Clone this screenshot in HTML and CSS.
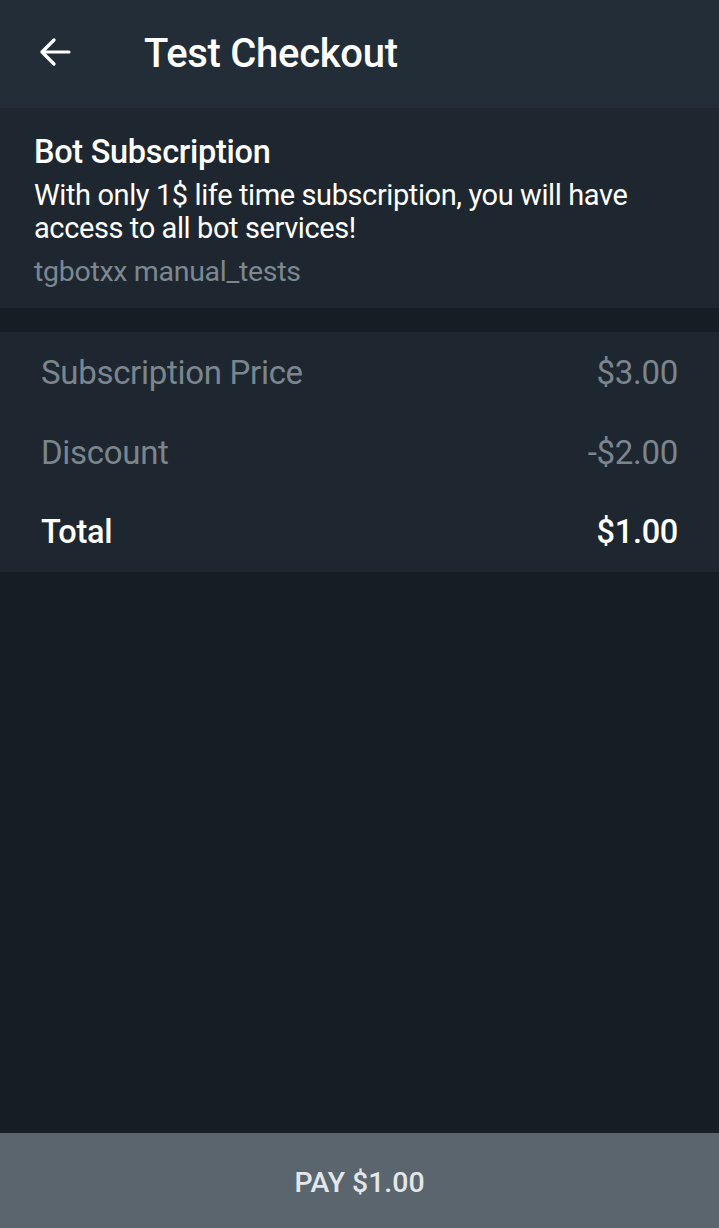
FILE: index.html
```html
<!DOCTYPE html>
<html>
<head>
<meta charset="utf-8">
<link rel="stylesheet" href="styles.css">
</head>
<body>
<div class="app">
  <header class="topbar">
    <svg class="back" width="34" height="28" viewBox="0 0 34 28"><path d="M31 14H4M16 2L4 14l12 12" fill="none" stroke="#fff" stroke-width="3.2" stroke-linecap="round" stroke-linejoin="round"/></svg>
    <h1 class="title">Test Checkout</h1>
  </header>
  <section class="product">
    <div class="p-name">Bot Subscription</div>
    <div class="p-desc">With only 1$ life time subscription, you will have access to all bot services!</div>
    <div class="p-bot">tgbotxx manual_tests</div>
  </section>
  <section class="prices">
    <div class="row"><span>Subscription Price</span><span>$3.00</span></div>
    <div class="row"><span>Discount</span><span>-$2.00</span></div>
    <div class="row total"><span>Total</span><span>$1.00</span></div>
  </section>
  <div class="spacer"></div>
  <button class="pay">PAY $1.00</button>
</div>
</body>
</html>
```
FILE: styles.css
```css
* { box-sizing: border-box; }
html, body { margin: 0; padding: 0; }
body { background: #151d25; font-family: Roboto, "Liberation Sans", sans-serif; color: #fff; }
.app { display: flex; flex-direction: column; height: 1228px; }
.topbar { height: 108px; background: #232d37; display: flex; align-items: center; padding-left: 38px; }
.back { display: block; margin-bottom: 4px; }
.title { margin: 0 0 0 72px; font-size: 40px; font-weight: 500; letter-spacing: -0.3px; margin-bottom: 2px; }
.product { background: #1e2730; height: 200px; padding: 24px 34px 0; }
.p-name { font-size: 32.5px; font-weight: 500; line-height: 40px; letter-spacing: -0.3px; }
.p-desc { font-size: 29px; line-height: 33px; margin-top: 7px; letter-spacing: -0.4px; }
.p-bot { font-size: 28.5px; line-height: 33px; margin-top: 10px; color: #7d8790; letter-spacing: -0.3px; }
.prices { background: #1e2730; margin-top: 24px; height: 240px; padding: 1px 41px 0; display: flex; flex-direction: column; }
.row { height: 80px; display: flex; justify-content: space-between; align-items: center; font-size: 33px; color: #7b858e; letter-spacing: -0.3px; }
.row.total { color: #fff; font-weight: 500; font-size: 32.5px; }
.spacer { flex: 1; }
.pay { height: 95px; border: 0; background: #5b656e; color: #e3e7ea; font-family: inherit; font-size: 28.4px; font-weight: 500; width: 100%; padding: 3px 0 0; }
```
